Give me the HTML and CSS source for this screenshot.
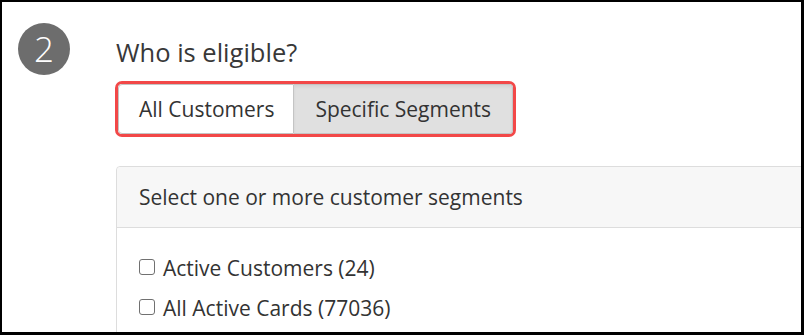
FILE: index.html
```html
<!DOCTYPE html>
<html lang="en">
<head>
<meta charset="utf-8">
<title>Who is eligible?</title>
<link rel="stylesheet" href="styles.css">
</head>
<body>
<div class="frame">
  <div class="step-col">
    <div class="step-num">2</div>
  </div>
  <div class="content">
    <h2 class="title">Who is eligible?</h2>
    <div class="toggle-wrap">
      <div class="toggle">
        <button class="seg seg-off" type="button">All Customers</button>
        <button class="seg seg-on" type="button">Specific Segments</button>
      </div>
    </div>
    <div class="panel">
      <div class="panel-head">Select one or more customer segments</div>
      <div class="panel-body">
        <label class="row"><input type="checkbox" class="cb"><span>Active Customers (24)</span></label>
        <label class="row"><input type="checkbox" class="cb"><span>All Active Cards (77036)</span></label>
      </div>
    </div>
  </div>
</div>
</body>
</html>
```
FILE: styles.css
```css
html, body {
  margin: 0;
  padding: 0;
  background: #000;
}
body {
  font-family: "Open Sans", "Noto Sans", "Liberation Sans", sans-serif;
  color: #333;
}
.frame {
  box-sizing: border-box;
  width: 804px;
  height: 335px;
  border-style: solid;
  border-color: #000;
  border-width: 2px 3px 3px 2px;
  background: #fff;
  overflow: hidden;
  display: flex;
  align-items: flex-start;
}
.step-col {
  flex: 0 0 auto;
  padding: 21px 0 0 16px;
  width: 97px;
}
.step-num {
  width: 52px;
  height: 52px;
  border-radius: 50%;
  background: #6d6d6d;
  color: #fff;
  font-size: 35px;
  font-weight: 300;
  line-height: 52px;
  text-align: center;
}
.content {
  flex: 0 0 auto;
  padding-top: 33px;
}
.title {
  margin: 0 0 12px 1px;
  font-size: 25.5px;
  font-weight: 400;
  line-height: 34px;
  color: #383838;
}
.toggle-wrap {
  display: inline-block;
  border: 3px solid #f24848;
  border-radius: 7px;
}
.toggle {
  display: flex;
}
.seg {
  font-family: inherit;
  font-size: 21px;
  line-height: 24px;
  color: #333;
  margin: 0;
  border: 1px solid #c4c4c4;
  padding: 12px 19px 12px 20px;
  cursor: pointer;
}
.seg-off {
  background: #fff;
  border-radius: 4px 0 0 4px;
}
.seg-on {
  background: #e0e0e0;
  border-left: 0;
  border-radius: 0 4px 4px 0;
  padding: 12px 21px;
  box-shadow: inset 0 2px 3px rgba(0, 0, 0, 0.06);
}
.panel {
  margin: 29px 0 0 1px;
  width: 720px;
  border: 1px solid #dddddd;
  border-radius: 4px;
}
.panel-head {
  background: #f7f7f7;
  border-bottom: 1px solid #dddddd;
  border-radius: 4px 4px 0 0;
  padding: 18px 22px;
  font-size: 21px;
  line-height: 24px;
}
.panel-body {
  padding: 28px 22px;
}
.row {
  display: flex;
  align-items: center;
  font-size: 21px;
  line-height: 24px;
  margin-bottom: 16px;
}
.cb {
  appearance: none;
  -webkit-appearance: none;
  box-sizing: border-box;
  width: 16px;
  height: 16px;
  margin: -2px 8px 0 0;
  border: 1.5px solid #707070;
  border-radius: 3px;
  background: #fff;
}
```
